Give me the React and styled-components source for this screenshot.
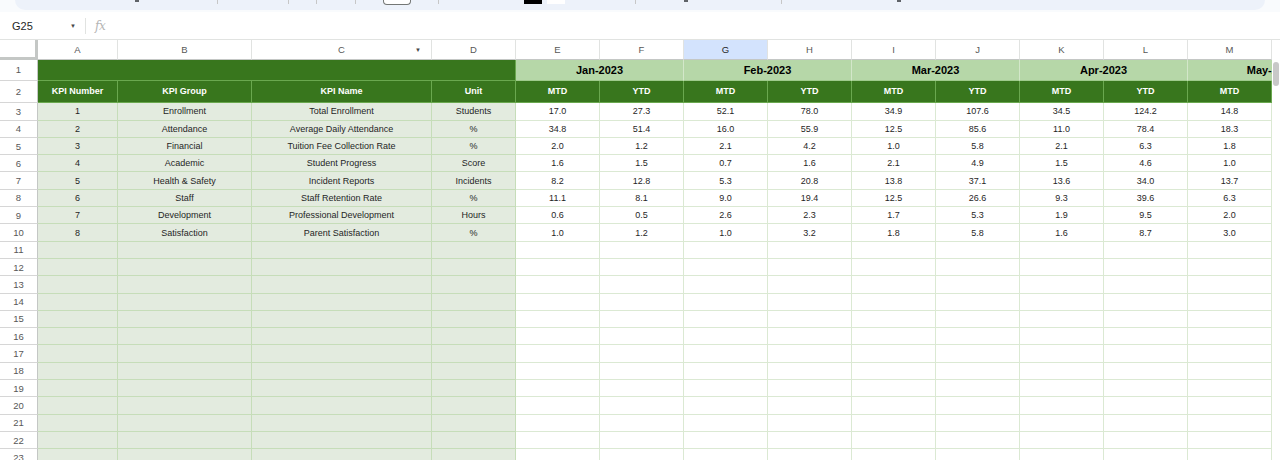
import React from "react";
import styled, { createGlobalStyle } from "styled-components";

const COLS = "38px 80px 134px 180px 84px repeat(10, 84px)";
const LETTERS = ["A", "B", "C", "D", "E", "F", "G", "H", "I", "J", "K", "L", "M", ""];
const MONTHS = ["Jan-2023", "Feb-2023", "Mar-2023", "Apr-2023", "May-2023"];

const KPIS = [
  [1, "Enrollment", "Total Enrollment", "Students", [17.0, 27.3, 52.1, 78.0, 34.9, 107.6, 34.5, 124.2, 14.8]],
  [2, "Attendance", "Average Daily Attendance", "%", [34.8, 51.4, 16.0, 55.9, 12.5, 85.6, 11.0, 78.4, 18.3]],
  [3, "Financial", "Tuition Fee Collection Rate", "%", [2.0, 1.2, 2.1, 4.2, 1.0, 5.8, 2.1, 6.3, 1.8]],
  [4, "Academic", "Student Progress", "Score", [1.6, 1.5, 0.7, 1.6, 2.1, 4.9, 1.5, 4.6, 1.0]],
  [5, "Health & Safety", "Incident Reports", "Incidents", [8.2, 12.8, 5.3, 20.8, 13.8, 37.1, 13.6, 34.0, 13.7]],
  [6, "Staff", "Staff Retention Rate", "%", [11.1, 8.1, 9.0, 19.4, 12.5, 26.6, 9.3, 39.6, 6.3]],
  [7, "Development", "Professional Development", "Hours", [0.6, 0.5, 2.6, 2.3, 1.7, 5.3, 1.9, 9.5, 2.0]],
  [8, "Satisfaction", "Parent Satisfaction", "%", [1.0, 1.2, 1.0, 3.2, 1.8, 5.8, 1.6, 8.7, 3.0]],
];

const EMPTY_ROWS = Array.from({ length: 13 }, (_, i) => i + 11);

const GlobalStyle = createGlobalStyle`
  html, body {
    margin: 0;
    padding: 0;
    background: #f9fbfd;
    font-family: "Liberation Sans", Arial, sans-serif;
    overflow: hidden;
  }
`;

export default function App() {
  return (
    <>
      <GlobalStyle />
      <TopStrip>
        <ToolPill>
          <ToolGap $w={120} />
          <ToolDot />
          <ToolGap $w={78} />
          <ToolSep />
          <ToolGap $w={70} />
          <ToolSep />
          <ToolGap $w={27} />
          <ToolSep />
          <ToolGap $w={38} />
          <ToolSep />
          <ToolGap $w={27} />
          <ToolBox />
          <ToolGap $w={27} />
          <ToolSep />
          <ToolGap $w={85} />
          <ToolSwatch $color="#000" />
          <ToolGap $w={5} />
          <ToolSwatch $color="#fff" />
          <ToolGap $w={70} />
          <ToolSep />
          <ToolGap $w={48} />
          <ToolDot />
          <ToolGap $w={93} />
          <ToolSep />
          <ToolGap $w={115} />
          <ToolDot />
        </ToolPill>
      </TopStrip>

      <FormulaBar>
        <NameBox>G25</NameBox>
        <Caret>▼</Caret>
        <BarSep />
        <Fx>fx</Fx>
      </FormulaBar>

      <SheetArea>
        <Grid>
          <Row $h={20}>
            <Corner />
            {LETTERS.map((l, i) => (
              <ColHead key={i} $selected={l === "G"}>
                {l}
                {l === "C" && <FilterArrow>▼</FilterArrow>}
              </ColHead>
            ))}
          </Row>

          <Row $h={20.7}>
            <RowNum>1</RowNum>
            <Cell $tone="dark" $span={4} />
            {MONTHS.map((m) => (
              <Cell key={m} $tone="month" $span={2}>
                {m}
              </Cell>
            ))}
          </Row>

          <Row $h={22.6}>
            <RowNum>2</RowNum>
            <Cell $tone="dark">KPI Number</Cell>
            <Cell $tone="dark">KPI Group</Cell>
            <Cell $tone="dark">KPI Name</Cell>
            <Cell $tone="dark">Unit</Cell>
            {MONTHS.map((m, i) => (
              <React.Fragment key={m}>
                <Cell $tone="dark">MTD</Cell>
                <Cell $tone="dark">{i < MONTHS.length - 1 ? "YTD" : ""}</Cell>
              </React.Fragment>
            ))}
          </Row>

          {KPIS.map(([num, group, name, unit, vals], i) => (
            <Row key={num} $h={17.3}>
              <RowNum>{i + 3}</RowNum>
              <Cell $tone="key">{num}</Cell>
              <Cell $tone="key">{group}</Cell>
              <Cell $tone="key">{name}</Cell>
              <Cell $tone="key">{unit}</Cell>
              {Array.from({ length: 10 }, (_, j) => (
                <Cell key={j} $tone="value">
                  {vals[j] !== undefined ? vals[j].toFixed(1) : ""}
                </Cell>
              ))}
            </Row>
          ))}

          {EMPTY_ROWS.map((n) => (
            <Row key={n} $h={17.3}>
              <RowNum>{n}</RowNum>
              {Array.from({ length: 4 }, (_, j) => (
                <Cell key={j} $tone="key" />
              ))}
              {Array.from({ length: 10 }, (_, j) => (
                <Cell key={j} $tone="value" />
              ))}
            </Row>
          ))}
        </Grid>
        <ScrollGutter>
          <ScrollThumb />
        </ScrollGutter>
      </SheetArea>
    </>
  );
}

const TopStrip = styled.div`
  height: 12px;
  padding: 0 15px;
  background: #f9fbfd;
`;

const ToolPill = styled.div`
  height: 10px;
  display: flex;
  align-items: flex-start;
  background: #edf2fa;
  border-radius: 0 0 14px 14px;
`;

const ToolGap = styled.div`
  width: ${(p) => p.$w}px;
  flex: none;
`;

const ToolSep = styled.div`
  width: 1px;
  height: 4px;
  background: #c7c7c7;
  flex: none;
`;

const ToolDot = styled.div`
  width: 4px;
  height: 2px;
  background: #5f6368;
  flex: none;
`;

const ToolBox = styled.div`
  width: 26px;
  height: 4px;
  border: 1px solid #747775;
  border-top: none;
  border-radius: 0 0 4px 4px;
  background: #fff;
  flex: none;
`;

const ToolSwatch = styled.div`
  width: 18px;
  height: 4px;
  background: ${(p) => p.$color};
  flex: none;
`;

const FormulaBar = styled.div`
  height: 28px;
  display: flex;
  align-items: center;
  background: #fff;
  border-bottom: 1px solid #e1e3e1;
  box-sizing: border-box;
`;

const NameBox = styled.div`
  width: 58px;
  padding-left: 12px;
  font-size: 11px;
  color: #1f1f1f;
`;

const Caret = styled.div`
  font-size: 6px;
  color: #444746;
  width: 15px;
`;

const BarSep = styled.div`
  width: 1px;
  height: 16px;
  background: #e1e3e1;
  margin-right: 9px;
`;

const Fx = styled.div`
  font-family: "DejaVu Serif", "Liberation Serif", serif;
  font-style: italic;
  font-size: 12px;
  color: #b5b5b5;
  letter-spacing: -0.5px;
`;

const SheetArea = styled.div`
  display: flex;
  background: #fff;
`;

const Grid = styled.div`
  width: 1272px;
  flex: none;
  overflow: hidden;
`;

const Row = styled.div`
  display: grid;
  grid-template-columns: ${COLS};
  height: ${(p) => p.$h}px;
  width: max-content;
`;

const Corner = styled.div`
  background: #fff;
  border-right: 3px solid #c4c7c5;
  border-bottom: 3px solid #c4c7c5;
  box-sizing: border-box;
`;

const ColHead = styled.div`
  position: relative;
  display: flex;
  align-items: center;
  justify-content: center;
  font-size: 9.5px;
  color: ${(p) => (p.$selected ? "#1f1f1f" : "#575757")};
  background: ${(p) => (p.$selected ? "#d3e3fd" : "#fff")};
  border-right: 1px solid #e1e3e1;
  border-bottom: 1px solid #c4c7c5;
  box-sizing: border-box;
`;

const FilterArrow = styled.span`
  position: absolute;
  right: 10px;
  top: 50%;
  transform: translateY(-50%);
  font-size: 6px;
  color: #444746;
`;

const RowNum = styled.div`
  display: flex;
  align-items: center;
  justify-content: center;
  font-size: 9.5px;
  color: #575757;
  background: #fff;
  border-right: 1px solid #c4c7c5;
  border-bottom: 1px solid #d6d6d6;
  box-sizing: border-box;
`;

const TONES = {
  dark: `
    background: #38761d;
    color: #fff;
    font-weight: bold;
    border-right: 1px solid #6aa84f;
    border-bottom: 1px solid #6aa84f;
  `,
  month: `
    background: #b6d7a8;
    color: #000;
    font-weight: bold;
    font-size: 11px;
    border-right: 1px solid #d3e7ca;
    border-bottom: 1px solid #9fcb8c;
  `,
  key: `
    background: #e3ebdf;
    color: #1f1f1f;
    border-right: 1px solid #c6ddb9;
    border-bottom: 1px solid #c6ddb9;
  `,
  value: `
    background: #fff;
    color: #1f1f1f;
    border-right: 1px solid #dbe9d3;
    border-bottom: 1px solid #dbe9d3;
  `,
};

const Cell = styled.div`
  grid-column: span ${(p) => p.$span || 1};
  display: flex;
  align-items: center;
  justify-content: center;
  font-size: 9px;
  white-space: nowrap;
  overflow: hidden;
  box-sizing: border-box;
  ${(p) => TONES[p.$tone]}
`;

const ScrollGutter = styled.div`
  width: 8px;
  flex: none;
  background: #fff;
  padding-top: 22px;
  box-sizing: border-box;
`;

const ScrollThumb = styled.div`
  width: 6px;
  height: 24px;
  margin-left: 1px;
  border-radius: 3px;
  background: #c8c8c8;
`;
